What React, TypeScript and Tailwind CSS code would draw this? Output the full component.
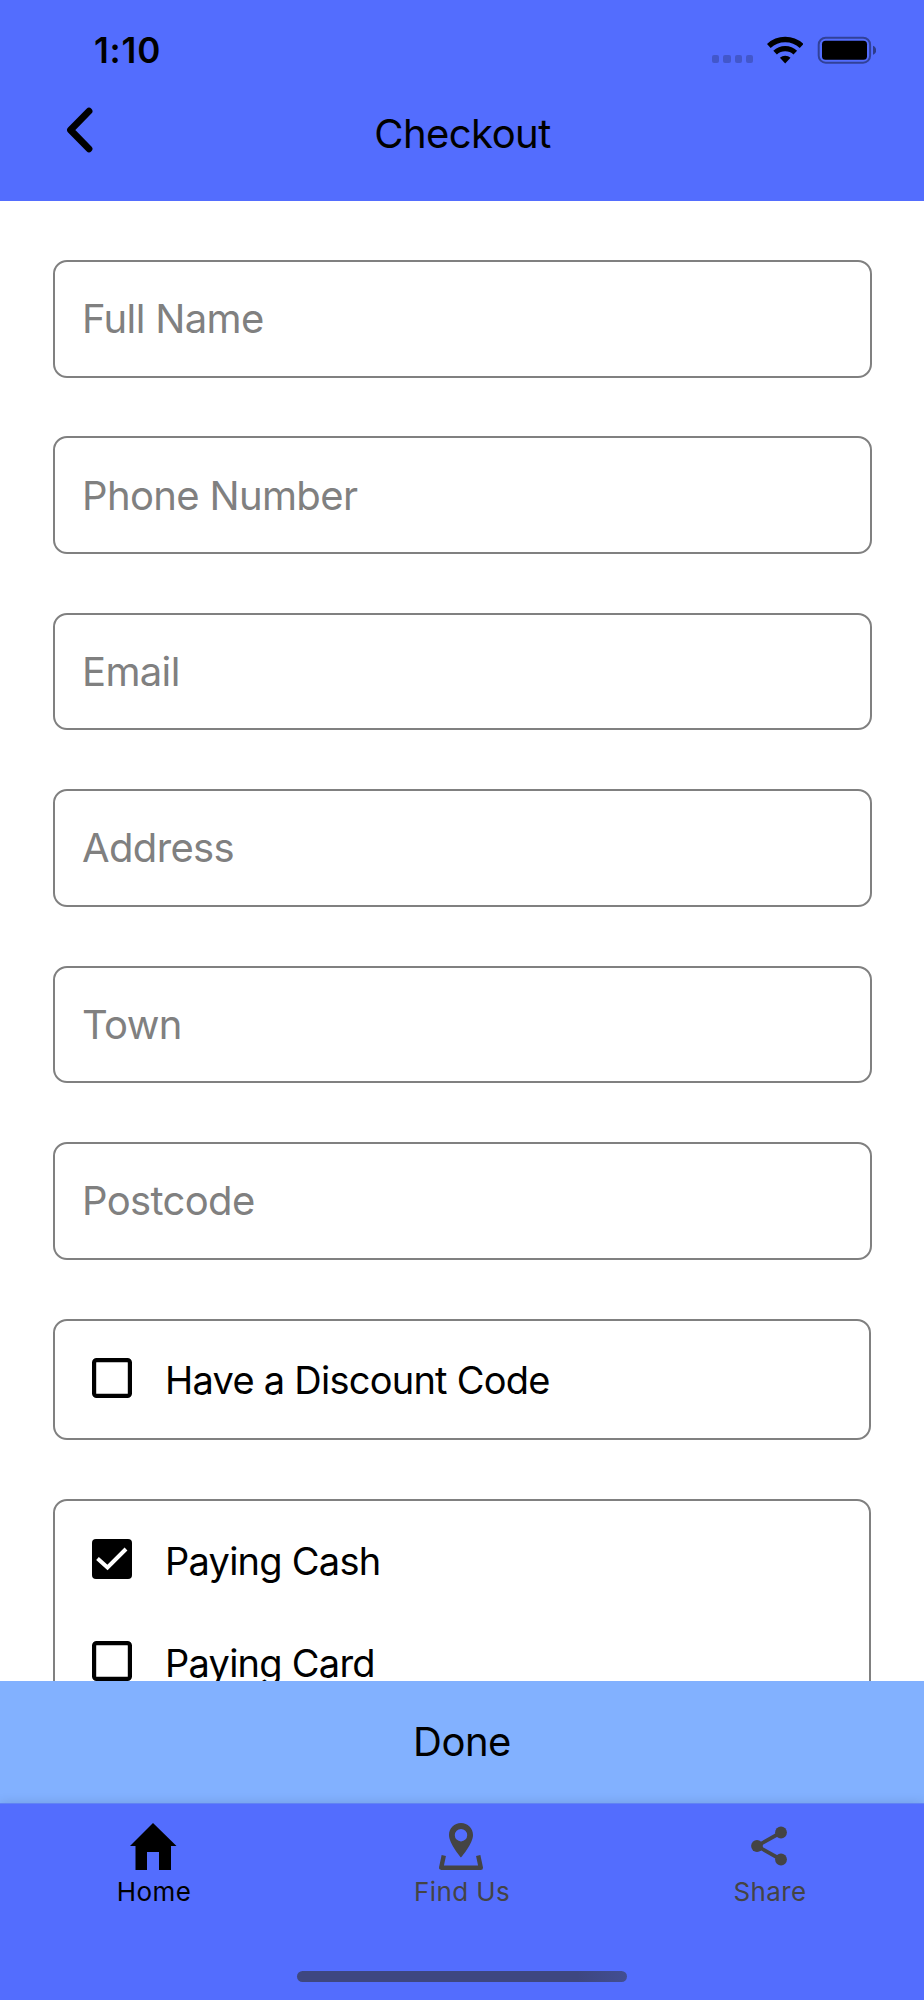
import { useState } from "react";

const FIELDS = ["Full Name", "Phone Number", "Email", "Address", "Town", "Postcode"];

type CheckRowProps = {
  label: string;
  checked: boolean;
  onToggle: () => void;
};

function CheckRow({ label, checked, onToggle }: CheckRowProps) {
  return (
    <button type="button" onClick={onToggle} className="flex items-center h-11">
      <svg className="w-10 h-10 shrink-0" viewBox="0 0 40 40" fill="none">
        {checked ? (
          <>
            <rect width="40" height="40" rx="4" fill="#000" />
            <path d="M5.5 19.5L15.5 28.5L34 10" stroke="#fff" strokeWidth="4" />
          </>
        ) : (
          <rect x="2.1" y="2.1" width="35.8" height="35.8" rx="2.5" stroke="#000" strokeWidth="4.2" />
        )}
      </svg>
      <span className="ml-[33px] mt-[4px] text-[38px] leading-[40px] tracking-[-0.75px] whitespace-nowrap">
        {label}
      </span>
    </button>
  );
}

function StatusBar() {
  return (
    <div className="h-[101px] flex items-center justify-between pl-[94px] pr-[48px]">
      <span className="mb-[2px] text-[35px] leading-[40px] font-semibold tracking-[0.8px]">1:10</span>

      <div className="flex items-center mb-px">
        <div className="flex gap-[4px] mt-[18px]">
          <span className="w-[7.2px] h-[7.2px] rounded-[2px] bg-black/20" />
          <span className="w-[7.2px] h-[7.2px] rounded-[2px] bg-black/20" />
          <span className="w-[7.2px] h-[7.2px] rounded-[2px] bg-black/20" />
          <span className="w-[7.2px] h-[7.2px] rounded-[2px] bg-black/20" />
        </div>

        {/* Wifi */}
        <svg className="ml-[14px] w-[36px] h-[28px]" viewBox="0 0 36 28" fill="none">
          <path d="M1.8 9.95a24 24 0 0 1 32.8 0" stroke="#000" strokeWidth="5.4" />
          <path d="M8.1 16.7a14.8 14.8 0 0 1 20.2 0" stroke="#000" strokeWidth="5.2" />
          <path d="M18.2 27.5l-5.3-5.7a7.8 7.8 0 0 1 10.6 0z" fill="#000" />
        </svg>

        {/* Battery */}
        <svg className="ml-[14px] w-[59px] h-[28px]" viewBox="0 0 59 28" fill="none">
          <rect x="1.7" y="1.7" width="51.4" height="25" rx="7" stroke="#000" strokeOpacity="0.4" strokeWidth="2" />
          <rect x="5" y="4.8" width="45" height="19" rx="3.5" fill="#000" />
          <path d="M56 9.8c2 .8 3.2 2.5 3.2 4.5s-1.2 3.7-3.2 4.5z" fill="#000" fillOpacity="0.45" />
        </svg>
      </div>
    </div>
  );
}

function Header() {
  return (
    <header className="h-[201px] shrink-0 bg-[#536dfe]">
      <StatusBar />
      <div className="grid grid-cols-3 items-center h-[64px]">
        <button className="pl-[66px] pb-[7px]">
          <svg className="w-[28px] h-[46px]" viewBox="0 0 28 46" fill="none">
            <path d="M23 4.2L4.5 23L23 41.8" stroke="#000" strokeWidth="6.8" strokeLinecap="round" strokeLinejoin="round" />
          </svg>
        </button>
        <h1 className="pt-[2px] pl-px text-center text-[40px] leading-[48px] tracking-[-0.55px]">Checkout</h1>
      </div>
    </header>
  );
}

function TabBar() {
  return (
    <nav className="relative h-[197px] shrink-0 bg-[#536dfe] border-t border-[#6083f4] shadow-[0_-1px_10px_rgba(0,0,0,0.1)] flex flex-col">
      <div className="grid grid-cols-3 pt-[17px]">
        <button className="flex flex-col items-center text-black">
          <svg className="w-[50px] h-[52px]" viewBox="0 0 50 52" fill="currentColor">
            <path d="M24 2L47.5 25H42V49H30V31H18V49H6.5V25H1z" />
          </svg>
          <span className="mt-[4px] text-[26px] leading-[30px] tracking-[0.4px]">Home</span>
        </button>

        <button className="flex flex-col items-center text-[#444444]">
          <svg className="w-[50px] h-[52px]" viewBox="0 0 50 52" fill="none">
            <path
              d="M24 2c-6.7 0-12 5.3-12 12 0 8.6 12 22.5 12 22.5S36 22.6 36 14c0-6.7-5.3-12-12-12zm0 6a6.2 6.2 0 1 1 0 12.4A6.2 6.2 0 0 1 24 8z"
              fill="currentColor"
            />
            <path d="M6.8 34.5L4.2 46.7H43.8L41.2 34.5" stroke="currentColor" strokeWidth="4.4" strokeLinejoin="round" />
          </svg>
          <span className="mt-[4px] text-[26px] leading-[30px] tracking-[0.4px]">Find Us</span>
        </button>

        <button className="flex flex-col items-center text-[#444444]">
          <svg className="w-[50px] h-[52px]" viewBox="0 0 50 52" fill="currentColor">
            <path d="M36 11.5L12 25L36 38.5" fill="none" stroke="currentColor" strokeWidth="3.8" />
            <circle cx="36" cy="11.5" r="5.9" />
            <circle cx="12" cy="25" r="5.9" />
            <circle cx="36" cy="38.5" r="5.9" />
          </svg>
          <span className="mt-[4px] text-[26px] leading-[30px] tracking-[0.4px]">Share</span>
        </button>
      </div>

      {/* Home indicator */}
      <div className="mt-auto mb-[18px] mx-auto w-[330px] h-[11px] rounded-full bg-gradient-to-r from-[#3e4780] from-85% to-[#424e92]" />
    </nav>
  );
}

export default function App() {
  const [discount, setDiscount] = useState(false);
  const [payment, setPayment] = useState("cash");

  return (
    <div className="w-[924px] h-[2000px] flex flex-col overflow-hidden bg-white text-black font-['Inter','Liberation_Sans',sans-serif]">
      <Header />

      <main className="flex-1 min-h-0 overflow-hidden pl-[53px] pr-[52px] pt-[59px]">
        <form className="flex flex-col gap-[58.8px]" onSubmit={(e) => e.preventDefault()}>
          {FIELDS.map((field) => (
            <input
              key={field}
              placeholder={field}
              className="w-full h-[117.6px] px-[27px] border-2 border-[#808080] rounded-[14px] text-[40px] tracking-[-0.65px] placeholder:text-[#808080] outline-none"
            />
          ))}

          <div className="mt-[0.6px] mr-px h-[121.5px] pl-[37px] pt-[35px] border-2 border-[#808080] rounded-[14px]">
            <CheckRow label="Have a Discount Code" checked={discount} onToggle={() => setDiscount(!discount)} />
          </div>

          <div className="mr-px h-[230px] pl-[37px] pt-[35.5px] flex flex-col gap-[58.7px] border-2 border-[#808080] rounded-[14px]">
            <CheckRow label="Paying Cash" checked={payment === "cash"} onToggle={() => setPayment("cash")} />
            <CheckRow label="Paying Card" checked={payment === "card"} onToggle={() => setPayment("card")} />
          </div>
        </form>
      </main>

      <button className="h-[122px] shrink-0 bg-[#82b1ff] text-[40px] tracking-[-0.5px]">Done</button>
      <TabBar />
    </div>
  );
}
